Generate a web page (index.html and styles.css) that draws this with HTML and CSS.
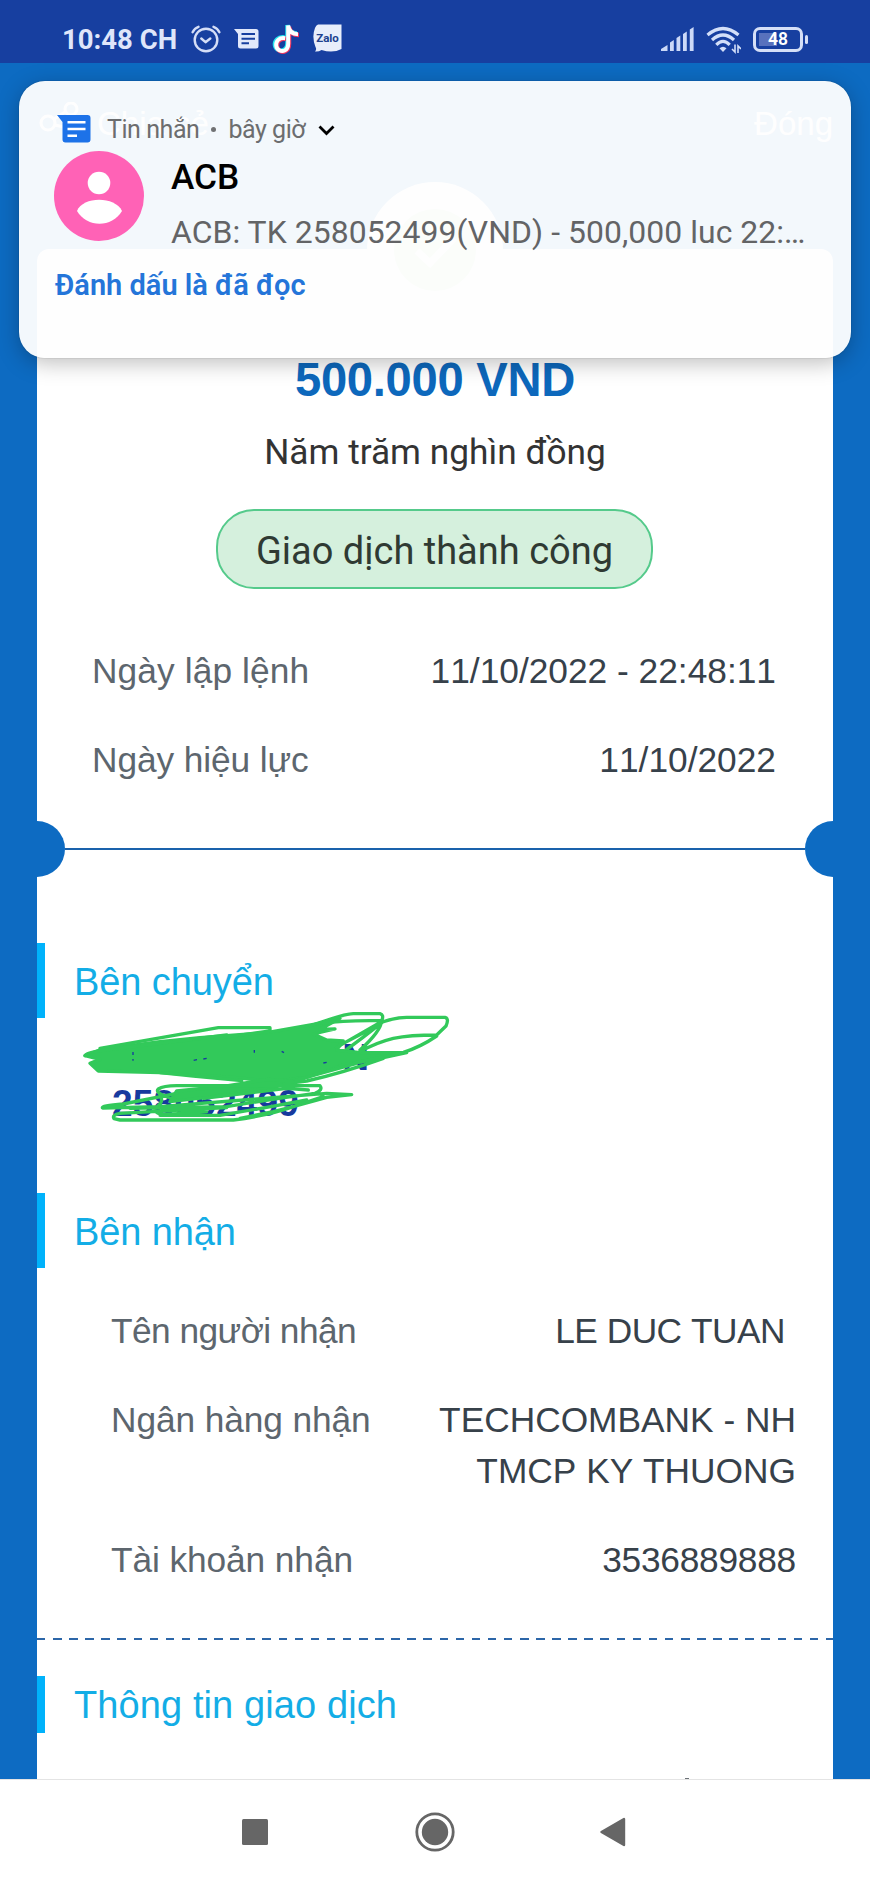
FILE: index.html
```html
<!DOCTYPE html>
<html lang="vi">
<head>
<meta charset="utf-8">
<title>Giao dịch thành công</title>
<link rel="stylesheet" href="styles.css">
</head>
<body>
<header class="status">
  <span class="status-time">10:48 CH</span>
  <svg class="ic-alarm" width="30" height="30" viewBox="0 0 30 30" fill="none" stroke="#d5def7" stroke-width="2.4" stroke-linecap="round" stroke-linejoin="round"><circle cx="15" cy="16" r="11.3"/><path d="M1.6 8.2Q3.5 4.3 7.5 2.8M28.4 8.2Q26.5 4.3 22.500 2.800M10.300 14.500L14.500 18.200L19.300 14.500"/></svg>
  <svg class="ic-msg" width="25" height="22" viewBox="0 0 25 22"><path d="M0 1H22Q24.500 1 24.500 3.500V18Q24.500 20.500 22 20.500H6.500Q4 20.500 4 18V6Z" fill="#e1e8fb"/><path d="M7.500 6H21M7.500 10.700H21M7.500 15.300H15" stroke="#173fa0" stroke-width="2"/></svg>
  <svg class="ic-tiktok" width="28" height="31" viewBox="0 0 28 31" fill="none" stroke-width="4.500"><path d="M12.500 13.500C6 12.500 2.500 17 3 21C3.500 25.500 8 27.500 11.500 26C14.500 24.800 15.500 22 15.500 19V1C16 6 20 9.500 25 9.500" stroke="#25e5ee"/><path d="M14 15C8 14 4.500 18 5 22C5.500 26.500 10 29 13.500 27C16.500 25.500 17 23 17 20V3C18 8 21.500 11 27 11" stroke="#ee3560"/><path d="M13.200 14.200C7 13.300 3.800 17.200 4.200 21.500C4.700 26 9.300 28 12.600 26.500C15.500 25.200 16.200 22.500 16.200 19.500V1.500C17 7 20.700 10.200 26 10.200" stroke="#fff" stroke-width="4"/></svg>
  <svg class="ic-zalo" width="29" height="29" viewBox="0 0 29 29"><path d="M5 0.500H28.500V25Q20 29.500 8.500 26Q5.500 28 2 27.500Q4 25.500 2.500 23Q-1.500 13 2 4Q3 1 5 .500Z" fill="#e8eefb"/><text x="14.500" y="17.500" class="zalo-text">Zalo</text></svg>
  <svg class="ic-signal" width="33" height="25" viewBox="0 0 33 25" fill="#ccd9f8"><path d="M0 24V22L6.500 18V24ZM9 24V15.500L12.800 13V24ZM15.500 24V11L19.300 8.500V24ZM22 24V7L25.800 4.500V24ZM28.800 24V2.500L32.600 0V24Z"/></svg>
  <svg class="ic-wifi" width="35" height="28" viewBox="0 0 35 28" fill="none" stroke="#d3dff9" stroke-width="3.200"><path d="M1.500 9Q17 -4 32.500 9M6 14Q17 4 28 14M10.300 18.800Q17 12 23.700 18.800"/><path d="M13.500 22.300Q17 19 20.500 22.300L17 26Z" fill="#d3dff9" stroke="none"/><path d="M29 18.500V26L26 23M32 27V20L35 23" stroke-width="1.600"/></svg>
  <span class="battery"><span class="battery-fill"></span><span class="battery-num">48</span></span>
</header>

<main class="app">
  <div class="app-bar">
    <span class="share"><svg width="46" height="34" viewBox="0 0 46 34" fill="none" stroke="#fff" stroke-width="3"><circle cx="11" cy="21" r="7"/><circle cx="34" cy="7" r="6"/><circle cx="36" cy="27" r="5"/><path d="M17 17L28 10M18 23L31 26"/></svg>Chia sẻ</span>
    <span>Đóng</span>
  </div>
  <section class="card">
    <div class="badge"><svg width="84" height="84" viewBox="0 0 84 84"><circle cx="42" cy="42" r="41" fill="#b4dca8"/><path d="M24 43L37 55L61 30" fill="none" stroke="#fff" stroke-width="7"/></svg></div>
    <div class="amount">500.000 VND</div>
    <div class="words">Năm trăm nghìn đồng</div>
    <div class="pill">Giao dịch thành công</div>
    <div class="dates">
      <div class="row"><span class="label label-loose">Ngày lập lệnh</span><span class="value">11/10/2022 - 22:48:11</span></div>
      <div class="row"><span class="label">Ngày hiệu lực</span><span class="value">11/10/2022</span></div>
    </div>
    <div class="notches"><i class="notch"></i><i class="rule"></i><i class="notch notch-right"></i></div>
    <h2 class="section">Bên chuyển</h2>
    <div class="sender">
      <div class="sender-name">N</div>
      <div class="sender-account">258052499</div>
      <svg class="scribble" width="420" height="150" viewBox="0 0 1260 450" fill="none" stroke="#32c95a" stroke-width="10" stroke-linecap="round" stroke-linejoin="round">
        <path fill="#32c95a" d="M125 178L300 155L420 143L620 128L790 98L840 85L780 118L825 117L760 132L800 150L850 153L830 180L900 188L1040 188L960 205L850 225L740 262L640 275L520 262L300 248L115 243L90 220L120 208L75 197Z"/>
        <path d="M120 175L475 113H630V123L470 145M75 197Q78 187 130 181L500 135M750 108Q850 72 880 71H960Q972 74 966 90Q962 125 900 180M790 100Q850 90 966 92M830 172L950 103Q1000 82 1040 82H1155Q1168 85 1158 108L1130 135Q1050 135 1000 145Q950 157 900 185M1130 138Q1080 172 1030 187L880 220M840 165Q910 130 966 97M860 178Q900 150 966 97M970 205Q850 248 740 273L640 285M700 273L890 220M300 248L400 258L545 272V285"/>
        <path fill="#32c95a" d="M350 303L500 288L625 268L700 275L640 293L550 305L440 322L330 335Z"/>
        <path d="M350 330Q280 310 295 297Q310 287 350 287H780Q790 300 765 310Q650 325 500 350L210 355M350 310L190 342Q120 348 128 354L300 350L800 310L875 314L800 322Q700 350 640 365L540 385M500 353L180 370Q155 375 162 386L180 390H520Q620 378 700 350L790 320M295 305Q320 340 280 355Q285 370 310 374L440 365M430 325L680 295L745 300M300 376H480L620 352L740 330"/>
        <g stroke="#173a9e" stroke-width="4" stroke-linecap="butt"><path d="M219 186V195M219 207V212M583 180V188M665 184L672 188M401 211L411 209M430 207L440 205M790 219L800 217"/></g>
      </svg>
    </div>
    <h2 class="section">Bên nhận</h2>
    <div class="receiver">
      <div class="row"><span class="label label-tight">Tên người nhận</span><span class="value value-padded">LE DUC TUAN</span></div>
      <div class="row"><span class="label">Ngân hàng nhận</span><span class="value">TECHCOMBANK - NH<br>TMCP KY THUONG</span></div>
      <div class="row"><span class="label">Tài khoản nhận</span><span class="value value-number">3536889888</span></div>
    </div>
    <div class="dashes"></div>
    <h2 class="section section-small">Thông tin giao dịch</h2>
    <div class="clipped-mark"></div>
  </section>
</main>

<nav class="nav">
  <svg width="26" height="26" viewBox="0 0 26 26"><rect width="26" height="26" rx="1.500" fill="#666"/></svg>
  <svg class="nav-home" width="40" height="40" viewBox="0 0 40 40"><circle cx="20" cy="20" r="18.200" fill="none" stroke="#666" stroke-width="2.800"/><circle cx="20" cy="20" r="13.200" fill="#666"/></svg>
  <svg width="26" height="30" viewBox="0 0 26 30"><path d="M1.500 15L24 2V28Z" fill="#666" stroke="#666" stroke-width="2.400" stroke-linejoin="round"/></svg>
</nav>

<aside class="notification">
  <div class="note-head">
    <svg width="34" height="28" viewBox="0 0 34 28"><path d="M0 0H30.500Q33.500 0 33.500 3V24.500Q33.500 27.500 30.500 27.500H8.500Q5.500 27.500 5.500 24.500V7Z" fill="#1d72e8"/><path d="M10.500 7.200H28.500M10.500 14H28.500M10.500 20.800H20" stroke="#fff" stroke-width="2.600"/></svg>
    <span class="note-app">Tin nhắn</span><span class="dot"></span><span class="note-time">bây giờ</span>
    <svg class="chevron" width="17" height="11" viewBox="0 0 17 11"><path d="M1.500 1.500L8.500 8.500L15.500 1.500" fill="none" stroke="#000" stroke-width="2.800"/></svg>
  </div>
  <div class="note-body">
    <svg width="90" height="90" viewBox="0 0 90 90"><circle cx="45" cy="45" r="45" fill="#ff62b6"/><circle cx="45" cy="32" r="11.300" fill="#fff"/><path d="M23 60C29 45 61 45 68 60C58 77 33 77 23 60Z" fill="#fff"/></svg>
    <div class="note-text"><div class="note-title">ACB</div><div class="note-msg">ACB: TK 258052499(VND) - 500,000 luc 22:…</div></div>
  </div>
  <div class="note-action">Đánh dấu là đã đọc</div>
</aside>
</body>
</html>
```
FILE: styles.css
```css
* { box-sizing: border-box; }
body {
  margin: 0;
  width: 870px;
  height: 1884px;
  display: flex;
  flex-direction: column;
  position: relative;
  overflow: hidden;
  font-family: "Liberation Sans", Arial, sans-serif;
  background: #0d6bc2;
}
svg { display: block; flex: none; }

.status {
  height: 63px;
  flex: none;
  background: #173fa0;
  display: flex;
  align-items: flex-start;
  padding-left: 62px;
  font-family: Roboto, sans-serif;
}
.status-time {
  width: 129px;
  margin-top: 23px;
  font-size: 27.500px;
  line-height: 34px;
  font-weight: 700;
  color: #dfe6fa;
  white-space: nowrap;
}
.ic-alarm { margin-top: 24px; }
.ic-msg { margin: 28px 0 0 13px; }
.ic-tiktok { margin: 24px 0 0 13px; }
.ic-zalo { margin: 24px 0 0 13px; }
.zalo-text { font: 700 11.500px Roboto, sans-serif; fill: #20428f; text-anchor: middle; }
.ic-signal { margin: 27px 0 0 319px; }
.ic-wifi { margin: 26px 0 0 12px; }
.battery {
  position: relative;
  margin: 27px 0 0 12px;
  width: 50px;
  height: 25px;
  border: 3px solid #d5dff7;
  border-radius: 7px;
  display: flex;
  align-items: center;
  justify-content: center;
}
.battery::after {
  content: "";
  position: absolute;
  left: 49px;
  top: 5px;
  width: 3px;
  height: 9px;
  border-radius: 2px;
  background: #d5dff7;
}
.battery-fill {
  position: absolute;
  left: 3px;
  top: 3px;
  width: 18px;
  height: 13px;
  background: #5871bd;
}
.battery-num { position: relative; font-size: 17.500px; font-weight: 600; line-height: 19px; color: #fff; }

.app {
  height: 1716px;
  flex: none;
  overflow: hidden;
  background: #0d6bc2;
  padding: 39px 37px 0;
}
.app-bar {
  height: 44px;
  display: flex;
  justify-content: space-between;
  font-size: 33px;
  line-height: 44px;
  color: #fff;
}
.share { display: flex; gap: 14px; }
.card {
  margin-top: 103px;
  height: 1600px;
  background: #fff;
  border-radius: 12px 12px 0 0;
  display: flex;
  flex-direction: column;
}
.badge {
  align-self: center;
  flex: none;
  margin-top: -67px;
  width: 136px;
  height: 136px;
  border-radius: 50%;
  background: #fff;
  display: flex;
  align-items: center;
  justify-content: center;
}
.amount {
  margin-top: 34px;
  text-align: center;
  font-size: 47.200px;
  line-height: 56px;
  font-weight: 700;
  letter-spacing: -.3px;
  color: #0d68bc;
}
.words {
  margin-top: 22px;
  text-align: center;
  font-family: Roboto, sans-serif;
  font-size: 35.250px;
  line-height: 44px;
  color: #333;
}
.pill {
  align-self: center;
  margin: 35px 1px 0 0;
  width: 437px;
  height: 80px;
  padding-top: 3px;
  border: 2px solid #55ca8b;
  border-radius: 38px;
  background: #d5f0dd;
  text-align: center;
  font-family: Roboto, sans-serif;
  font-size: 38px;
  line-height: 74px;
  color: #2f3a33;
}
.row { display: flex; justify-content: space-between; font-size: 35.300px; }
.label { color: #5d666e; letter-spacing: -.1px; }
.label-loose { letter-spacing: .1px; }
.label-tight { letter-spacing: -.55px; }
.value { color: #37414a; text-align: right; font-kerning: none; }
.value-number { letter-spacing: -.25px; }
.dates {
  margin-top: 60px;
  padding: 0 57px 0 55px;
  display: flex;
  flex-direction: column;
  gap: 45px;
  line-height: 44px;
}
.notches {
  margin: 39px 0 66px;
  height: 56px;
  flex: none;
  display: flex;
  align-items: center;
}
.notch { width: 28px; height: 56px; background: #0d6bc2; border-radius: 0 28px 28px 0; }
.notch-right { border-radius: 28px 0 0 28px; }
.rule { flex: 1; height: 2px; background: #1a62ac; }
.section {
  margin: 0;
  height: 75px;
  flex: none;
  padding: 2px 0 0 29px;
  border-left: 8px solid #00b2fb;
  font-size: 38px;
  font-weight: 400;
  letter-spacing: -.1px;
  line-height: 75px;
  color: #13ade6;
}
.sender {
  position: relative;
  margin-bottom: 66px;
  padding: 17px 0 0 75px;
  font-size: 37px;
  line-height: 46px;
  font-weight: 700;
  color: #173a9e;
}
.sender-name { width: 257px; text-align: right; }
.sender-account { letter-spacing: .2px; }
.scribble { position: absolute; left: 23px; top: -28px; }
.receiver {
  margin-top: 37px;
  padding: 0 37px 0 74px;
  display: flex;
  flex-direction: column;
  gap: 38px;
  line-height: 51px;
}
.value-padded { padding-right: 11px; letter-spacing: -.5px; }
.dashes {
  margin: 53px 0 36px;
  height: 2px;
  flex: none;
  background: repeating-linear-gradient(90deg, #2c66a8 0 8.500px, transparent 8.500px 16.100px);
}
.section-small { height: 57px; line-height: 57px; padding-top: 1px; letter-spacing: .1px; }
.clipped-mark { margin: 45px 0 0 648px; width: 4px; height: 1px; background: #6b7177; }

.nav {
  height: 105px;
  flex: none;
  border-top: 1px solid #e4e4e4;
  background: #fff;
  display: flex;
  justify-content: space-between;
  align-items: center;
  padding: 0 244px 0 242px;
}
.nav-home { margin-left: 2px; }

.notification {
  position: absolute;
  left: 19px;
  top: 81px;
  width: 832px;
  height: 277px;
  border-radius: 26px;
  background: rgba(254, 254, 254, .955);
  box-shadow: 0 5px 22px rgba(0, 0, 0, .26), 0 0 1px rgba(0, 0, 0, .5);
  font-family: Roboto, sans-serif;
}
.note-head {
  display: flex;
  align-items: center;
  height: 30px;
  margin: 32px 0 0 38px;
  padding-top: 1px;
  font-size: 25px;
  line-height: 30px;
  letter-spacing: -.45px;
  color: #6c6d6f;
}
.note-app { margin-left: 16px; }
.note-app, .note-time { padding-top: 2px; }
.dot { width: 5px; height: 5px; border-radius: 50%; background: #707173; margin: 2px 12px 0; }
.chevron { margin: 4px 0 0 13px; }
.note-body { display: flex; margin: 8px 0 0 35px; }
.note-text { margin-left: 27px; white-space: nowrap; }
.note-title { margin-top: 4px; font-size: 35.200px; line-height: 44px; font-weight: 500; color: #000; }
.note-msg { margin-top: 13px; font-size: 31.900px; line-height: 40px; letter-spacing: .06px; color: #636466; }
.note-action { margin: 15px 0 0 36px; font-size: 29px; line-height: 36px; font-weight: 600; color: #2475d9; }
```
